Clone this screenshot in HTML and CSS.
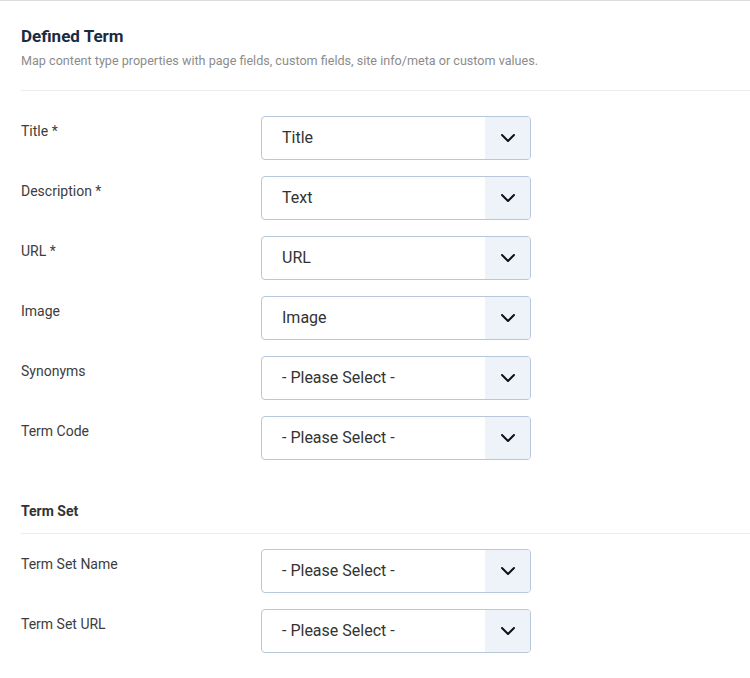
FILE: index.html
```html
<!DOCTYPE html>
<html lang="en">
<head>
<meta charset="utf-8">
<title>Defined Term</title>
<link rel="stylesheet" href="styles.css">
</head>
<body>
<div class="panel">
  <div class="header">
    <h2 class="title">Defined Term</h2>
    <p class="subtitle">Map content type properties with page fields, custom fields, site info/meta or custom values.</p>
  </div>
  <div class="fields">
    <div class="row"><label class="label">Title *</label><div class="select"><span class="value">Title</span><span class="arrow"><svg width="16" height="10" viewBox="0 0 16 10"><path d="M2 2l6 6 6-6" fill="none" stroke="#111" stroke-width="2" stroke-linecap="round" stroke-linejoin="round"/></svg></span></div></div>
    <div class="row"><label class="label">Description *</label><div class="select"><span class="value">Text</span><span class="arrow"><svg width="16" height="10" viewBox="0 0 16 10"><path d="M2 2l6 6 6-6" fill="none" stroke="#111" stroke-width="2" stroke-linecap="round" stroke-linejoin="round"/></svg></span></div></div>
    <div class="row"><label class="label">URL *</label><div class="select"><span class="value">URL</span><span class="arrow"><svg width="16" height="10" viewBox="0 0 16 10"><path d="M2 2l6 6 6-6" fill="none" stroke="#111" stroke-width="2" stroke-linecap="round" stroke-linejoin="round"/></svg></span></div></div>
    <div class="row"><label class="label">Image</label><div class="select"><span class="value">Image</span><span class="arrow"><svg width="16" height="10" viewBox="0 0 16 10"><path d="M2 2l6 6 6-6" fill="none" stroke="#111" stroke-width="2" stroke-linecap="round" stroke-linejoin="round"/></svg></span></div></div>
    <div class="row"><label class="label">Synonyms</label><div class="select"><span class="value">- Please Select -</span><span class="arrow"><svg width="16" height="10" viewBox="0 0 16 10"><path d="M2 2l6 6 6-6" fill="none" stroke="#111" stroke-width="2" stroke-linecap="round" stroke-linejoin="round"/></svg></span></div></div>
    <div class="row"><label class="label">Term Code</label><div class="select"><span class="value">- Please Select -</span><span class="arrow"><svg width="16" height="10" viewBox="0 0 16 10"><path d="M2 2l6 6 6-6" fill="none" stroke="#111" stroke-width="2" stroke-linecap="round" stroke-linejoin="round"/></svg></span></div></div>
  </div>
  <h3 class="subhead">Term Set</h3>
  <div class="fields">
    <div class="row"><label class="label">Term Set Name</label><div class="select"><span class="value">- Please Select -</span><span class="arrow"><svg width="16" height="10" viewBox="0 0 16 10"><path d="M2 2l6 6 6-6" fill="none" stroke="#111" stroke-width="2" stroke-linecap="round" stroke-linejoin="round"/></svg></span></div></div>
    <div class="row"><label class="label">Term Set URL</label><div class="select"><span class="value">- Please Select -</span><span class="arrow"><svg width="16" height="10" viewBox="0 0 16 10"><path d="M2 2l6 6 6-6" fill="none" stroke="#111" stroke-width="2" stroke-linecap="round" stroke-linejoin="round"/></svg></span></div></div>
  </div>
</div>
</body>
</html>
```
FILE: styles.css
```css
* { box-sizing: border-box; }
html, body { margin: 0; padding: 0; background: #fff; }
body {
  font-family: Roboto, "Liberation Sans", Arial, sans-serif;
  color: #333;
  border-top: 1px solid #dcdcdc;
  overflow: hidden;
}
.panel { padding-left: 21px; }
.header {
  padding-top: 23px;
  padding-bottom: 20px;
  border-bottom: 1px solid #ececec;
}
.title {
  margin: 0;
  font-size: 17px;
  line-height: 24px;
  font-weight: 700;
  color: #1c2a3f;
}
.subtitle {
  margin: 4px 0 0;
  font-size: 12.6px;
  line-height: 18px;
  color: #8c8c8c;
}
.fields {
  display: flex;
  flex-direction: column;
  gap: 16px;
  padding-top: 25px;
}
.row {
  display: grid;
  grid-template-columns: 240px 270px;
  align-items: start;
}
.label {
  font-size: 14px;
  line-height: 20px;
  padding-top: 5px;
  color: #3d3d3d;
}
.select {
  display: flex;
  height: 44px;
  border: 1px solid #b9c7dc;
  border-radius: 4px;
  overflow: hidden;
  background: #fff;
}
.value {
  flex: 1;
  display: flex;
  align-items: center;
  padding-left: 20px;
  padding-bottom: 2px;
  font-size: 16px;
  color: #333;
}
.arrow {
  width: 45px;
  display: flex;
  align-items: center;
  justify-content: center;
  background: #eef3fa;
}
.subhead {
  margin: 41px 0 0;
  font-size: 14px;
  line-height: 20px;
  font-weight: 700;
  color: #333;
  padding-bottom: 12px;
  border-bottom: 1px solid #ececec;
}
.subhead + .fields { padding-top: 15px; }
```
